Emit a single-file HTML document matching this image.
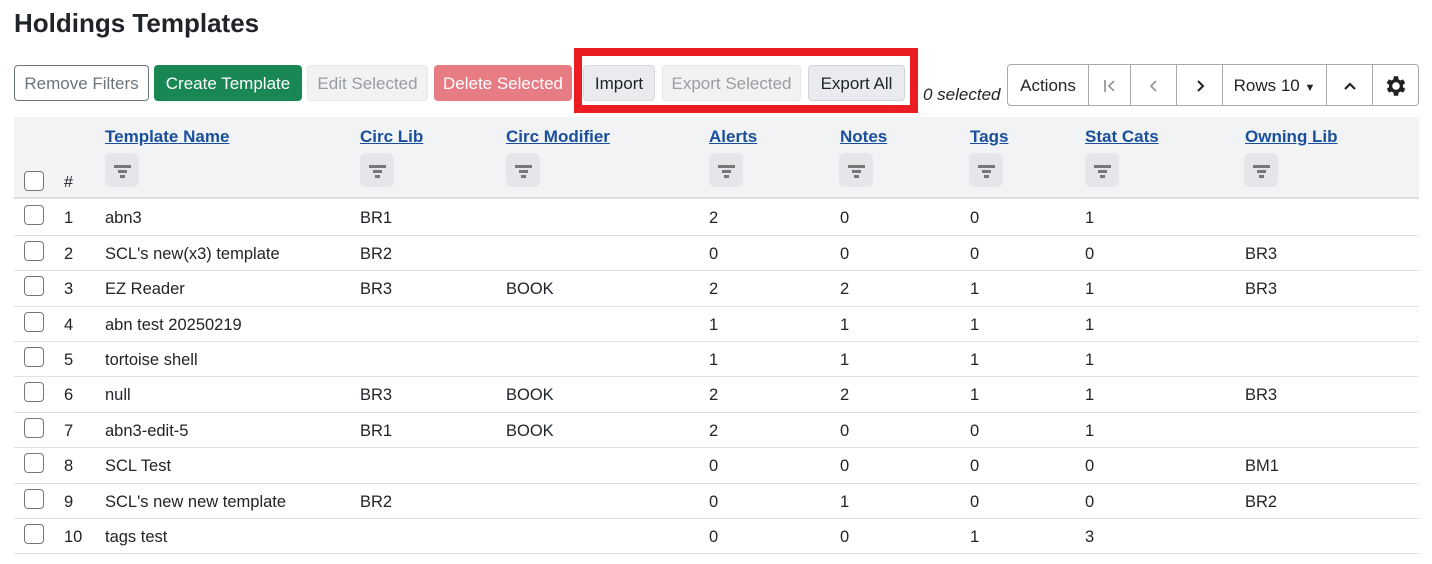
<!DOCTYPE html><html><head><style>
*{box-sizing:border-box;margin:0;padding:0}
body{width:1432px;height:564px;background:#fff;font-family:"Liberation Sans",sans-serif;color:#212529;position:relative;overflow:hidden;font-size:16.5px}
.a{position:absolute;white-space:nowrap}
h1{position:absolute;left:14px;top:8px;font-size:26px;font-weight:bold;color:#212529}
.btn{position:absolute;top:65px;height:36px;border-radius:4px;font-size:17px;line-height:36px;text-align:center;border:1px solid}
.cb{position:absolute;width:20px;height:20px;border:1.5px solid #777;border-radius:4px;background:#fff}
.hdr{position:absolute;left:14px;top:117px;width:1405px;height:82px;background:#f2f3f5;border-bottom:2px solid #dcdde0}
.hl{position:absolute;top:127px;font-weight:bold;color:#1a4f9c;text-decoration:underline;font-size:17px}
.fb{position:absolute;top:153px;width:34px;height:34px;background:#e4e6ea;border-radius:6px}
.fb i{position:absolute;left:9px;height:2.5px;background:#777}
.row{position:absolute;left:14px;width:1405px;border-bottom:1px solid #dee2e6}
.pg{position:absolute;top:64px;height:42px;border:1px solid #a7a9ab;border-left:none;font-size:17px;line-height:42px;text-align:center}
</style></head><body>
<h1>Holdings Templates</h1>
<div class="btn" style="left:14px;width:135px;border-color:#6c757d;color:#6c757d">Remove Filters</div>
<div class="btn" style="left:154px;width:148px;background:#198754;border-color:#198754;color:#fff">Create Template</div>
<div class="btn" style="left:307px;width:121px;background:#f1f2f4;border-color:#e5e7ea;color:#9a9da0">Edit Selected</div>
<div class="btn" style="left:434px;width:138px;background:#e77c84;border-color:#e77c84;color:#fff">Delete Selected</div>
<div class="btn" style="left:583px;width:72px;background:#e9ebee;border-color:#d8dade;color:#212529">Import</div>
<div class="btn" style="left:662px;width:139px;background:#f1f2f4;border-color:#e5e7ea;color:#9a9da0">Export Selected</div>
<div class="btn" style="left:808px;width:97px;background:#e9ebee;border-color:#d0d3d7;color:#212529">Export All</div>
<div class="a" style="left:574px;top:48px;width:344px;height:65px;border:8px solid #ec1c24"></div>
<div class="a" style="left:923px;top:85px;font-style:italic;font-size:17px">0 selected</div>
<div class="pg" style="left:1007px;width:82px;border-left:1px solid #a7a9ab;border-radius:4px 0 0 4px">Actions</div>
<div class="pg" style="left:1089px;width:42px;color:#999">
<svg width="18" height="18" viewBox="0 0 18 18" style="margin-top:12px"><path d="M4 3v12M13 4l-5 5 5 5" stroke="#999" stroke-width="1.8" fill="none"/></svg></div>
<div class="pg" style="left:1131px;width:46px"><svg width="18" height="18" viewBox="0 0 18 18" style="margin-top:12px"><path d="M11 4l-5 5 5 5" stroke="#999" stroke-width="1.8" fill="none"/></svg></div>
<div class="pg" style="left:1177px;width:46px"><svg width="18" height="18" viewBox="0 0 18 18" style="margin-top:12px"><path d="M7 4l5 5-5 5" stroke="#222" stroke-width="2" fill="none"/></svg></div>
<div class="pg" style="left:1223px;width:104px">Rows 10 <span style="font-size:11px">▼</span></div>
<div class="pg" style="left:1327px;width:46px"><svg width="18" height="18" viewBox="0 0 18 18" style="margin-top:12px"><path d="M4 12l5-5 5 5" stroke="#222" stroke-width="2.2" fill="none"/></svg></div>
<div class="pg" style="left:1373px;width:46px;border-radius:0 4px 4px 0"><svg width="26" height="26" viewBox="0 0 24 24" style="margin-top:8px"><path fill="#222" d="M19.4 13a7.5 7.5 0 0 0 0-2l2.1-1.6-2-3.5-2.5 1a7.5 7.5 0 0 0-1.7-1L15 3h-4l-.4 2.9a7.5 7.5 0 0 0-1.7 1l-2.5-1-2 3.5L6.6 11a7.5 7.5 0 0 0 0 2l-2.1 1.6 2 3.5 2.5-1a7.5 7.5 0 0 0 1.7 1L11 21h4l.4-2.9a7.5 7.5 0 0 0 1.7-1l2.5 1 2-3.5zM13 15.5a3.5 3.5 0 1 1 0-7 3.5 3.5 0 0 1 0 7z" transform="translate(-1 0)"/></svg></div>
<div class="hdr"></div>
<div class="cb" style="left:24px;top:171px"></div>
<div class="a" style="left:64px;top:174px;font-size:16px">#</div>
<div class="hl" style="left:105px">Template Name</div>
<div class="hl" style="left:360px">Circ Lib</div>
<div class="hl" style="left:506px">Circ Modifier</div>
<div class="hl" style="left:709px">Alerts</div>
<div class="hl" style="left:840px">Notes</div>
<div class="hl" style="left:970px">Tags</div>
<div class="hl" style="left:1085px">Stat Cats</div>
<div class="hl" style="left:1245px">Owning Lib</div>
<div id="fbs"></div>
<div id="rows"></div>
<script>
var fx=[105,360,506,709,839,969,1085,1244],f="";
for(var k=0;k<8;k++)f+='<div class="fb" style="left:'+fx[k]+'px"><i style="top:12px;width:17px"></i><i style="top:17px;left:13px;width:9px"></i><i style="top:22px;left:15px;width:5px"></i></div>';
document.getElementById("fbs").innerHTML=f;
var d=[["abn3","BR1","","2","0","0","1",""],["SCL's new(x3) template","BR2","","0","0","0","0","BR3"],["EZ Reader","BR3","BOOK","2","2","1","1","BR3"],["abn test 20250219","","","1","1","1","1",""],["tortoise shell","","","1","1","1","1",""],["null","BR3","BOOK","2","2","1","1","BR3"],["abn3-edit-5","BR1","BOOK","2","0","0","1",""],["SCL Test","","","0","0","0","0","BM1"],["SCL's new new template","BR2","","0","1","0","0","BR2"],["tags test","","","0","0","1","3",""]];
var xs=[105,360,506,709,840,970,1085,1245],h="";
var lines=[199,235,270,306,341,376,412,447,483,518,553];
for(var i=0;i<10;i++){var t=lines[i],b=lines[i+1],ty=(t+b)/2-8;
h+='<div class="row" style="top:'+t+'px;height:'+(b-t+1)+'px"></div>';
h+='<div class="cb" style="left:24px;top:'+(t+6)+'px"></div>';
h+='<div class="a" style="left:64px;top:'+ty+'px">'+(i+1)+'</div>';
for(var j=0;j<8;j++)h+='<div class="a" style="left:'+xs[j]+'px;top:'+ty+'px">'+d[i][j]+'</div>';}
document.getElementById("rows").innerHTML=h;
</script>
</body></html>
